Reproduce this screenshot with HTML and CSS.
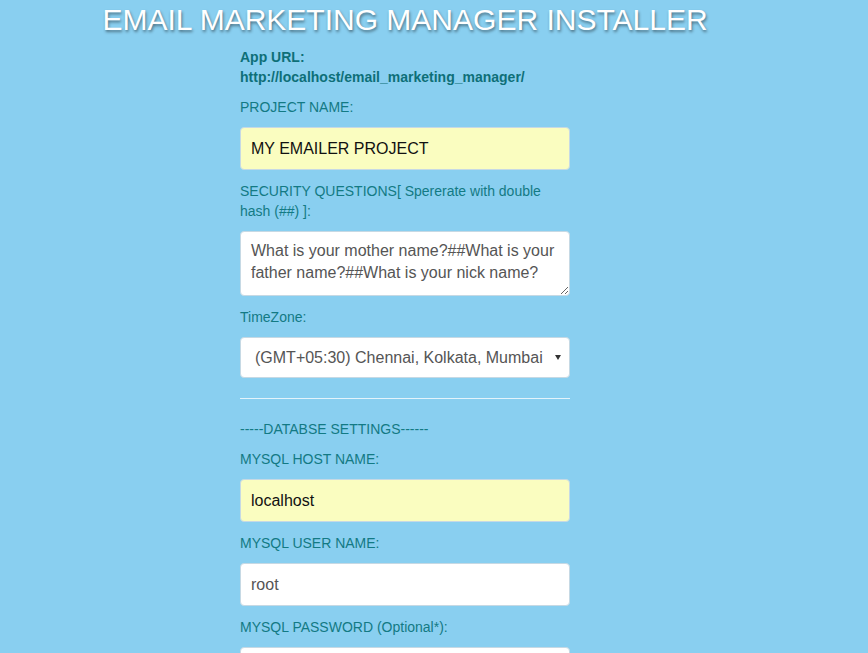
FILE: index.html
```html
<!DOCTYPE html>
<html lang="en">
<head>
    <meta charset="UTF-8">
    <meta name="viewport" content="width=device-width, initial-scale=1.0">
    <title>Email Marketing Manager Installer</title>
    <link rel="stylesheet" href="styles.css">
</head>
<body>

    <div class="page">
        <h1 class="title">EMAIL MARKETING MANAGER INSTALLER</h1>

        <form class="install-form" action="#" method="post">
            <div class="app-url">
                App URL:<br>
                http://localhost/email_marketing_manager/
            </div>

            <div class="field">
                <label for="project_name">PROJECT NAME:</label>
                <input type="text" id="project_name" class="input filled" value="MY EMAILER PROJECT">
            </div>

            <div class="field">
                <label for="questions">SECURITY QUESTIONS[ Spererate with double hash (##) ]:</label>
                <textarea id="questions" class="input area">What is your mother name?##What is your father name?##What is your nick name?</textarea>
            </div>

            <div class="field">
                <label for="timezone">TimeZone:</label>
                <div class="select-wrap">
                    <select id="timezone" class="input select">
                        <option>(GMT+05:30) Chennai, Kolkata, Mumbai, New Delhi</option>
                    </select>
                </div>
            </div>

            <hr class="divider">

            <div class="section-title">-----DATABSE SETTINGS------</div>

            <div class="field">
                <label for="db_host">MYSQL HOST NAME:</label>
                <input type="text" id="db_host" class="input filled" value="localhost">
            </div>

            <div class="field">
                <label for="db_user">MYSQL USER NAME:</label>
                <input type="text" id="db_user" class="input" value="root">
            </div>

            <div class="field">
                <label for="db_pass">MYSQL PASSWORD (Optional*):</label>
                <input type="password" id="db_pass" class="input">
            </div>
        </form>
    </div>

</body>
</html>
```

FILE: styles.css
```css
body {
    font-family: "Liberation Sans", Arial, sans-serif;
    background-color: #89cff0;
    margin: 0;
    padding: 0;
    color: #137a84;
}
.page {
    width: 810px;
}
.title {
    margin: 2px 0 0;
    font-size: 30px;
    line-height: 36px;
    font-weight: normal;
    text-align: center;
    color: #fff;
    text-shadow: 1px 2px 3px rgba(0, 0, 0, 0.45);
}
.install-form {
    width: 330px;
    margin: 9px auto 0;
}
.app-url {
    font-size: 14px;
    font-weight: bold;
    line-height: 20px;
    color: #0e6f78;
    margin-bottom: 10px;
}
.field {
    margin-bottom: 11px;
}
.field label,
.section-title {
    display: block;
    font-size: 14px;
    line-height: 20px;
    margin-bottom: 10px;
}
.input {
    display: block;
    box-sizing: border-box;
    width: 100%;
    height: 43px;
    padding: 0 10px;
    font-family: "Liberation Sans", Arial, sans-serif;
    font-size: 16px;
    color: #555;
    background-color: #fff;
    border: 1px solid #c6d9e4;
    border-radius: 4px;
    outline: none;
}
.input.filled {
    background-color: #fafdc0;
    color: #111;
}
.area {
    height: 65px;
    padding: 8px 10px;
    line-height: 22px;
    resize: vertical;
}
.select-wrap {
    position: relative;
}
.select {
    height: 41px;
    padding: 0 26px 0 14px;
    -webkit-appearance: none;
    appearance: none;
    text-overflow: clip;
}
.select-wrap::after {
    content: "";
    position: absolute;
    right: 9px;
    top: 18px;
    border-left: 3px solid transparent;
    border-right: 3px solid transparent;
    border-top: 5px solid #333;
    pointer-events: none;
}
.divider {
    border: 0;
    border-top: 1px solid #e3f3fb;
    margin: 20px 0 20px;
}
```
